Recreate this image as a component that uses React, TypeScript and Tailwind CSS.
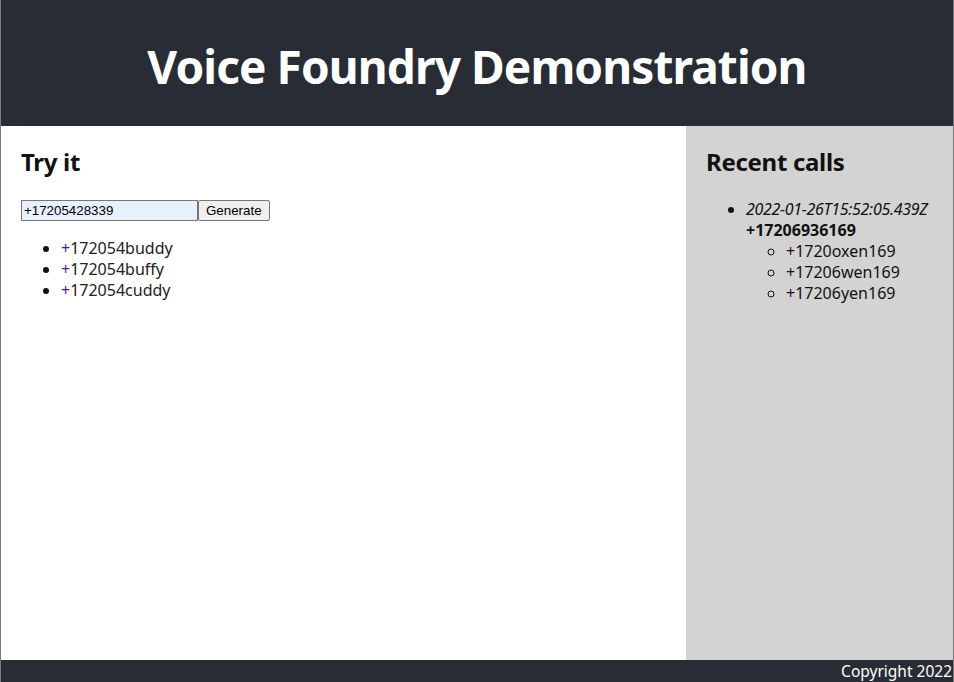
import React from 'react';

const suggestions = ['172054buddy', '172054buffy', '172054cuddy'];
const related = ['1720oxen169', '17206wen169', '17206yen169'];

const App: React.FC = () => {
  return (
    <div className="h-[682px] flex flex-col border-x border-[#7a7a7a] font-['Noto_Sans',sans-serif] text-[#111]">
      <header className="h-[126px] shrink-0 bg-[#282c34] flex items-center justify-center">
        <h1 className="text-white text-[46px] tracking-[-0.9px] font-bold leading-none mt-[6px]">Voice Foundry Demonstration</h1>
      </header>

      <main className="flex flex-1">
        <section className="flex-1 bg-white px-5 pt-5">
          <h2 className="text-2xl font-bold leading-[32px] mb-[22px] tracking-[-0.3px]">Try it</h2>
          <form className="flex items-center h-[21px]" onSubmit={(e) => e.preventDefault()}>
            <input
              defaultValue="+17205428339"
              className="w-[177px] h-[21px] border border-[#767676] bg-[#e8f0fe] px-[2px] text-[13.33px] font-['Liberation_Sans',sans-serif] text-black outline-none"
            />
            <button className="h-[21px] px-[7px] border border-[#767676] rounded-[2px] bg-[#efefef] text-[13.33px] font-['Liberation_Sans',sans-serif] text-black">
              Generate
            </button>
          </form>
          <ul className="list-disc pl-10 mt-[17px] text-base leading-[21px]">
            {suggestions.map((s) => (
              <li key={s}>
                <a href="#" className="text-[#222]"><span className="text-[#551a8b]">+</span>{s}</a>
              </li>
            ))}
          </ul>
        </section>

        <aside className="w-[267px] shrink-0 bg-[#d3d3d3] px-5 pt-5">
          <h2 className="text-2xl font-bold leading-[32px] mb-[21px] tracking-[-0.3px]">Recent calls</h2>
          <ul className="list-disc pl-10 text-base leading-[21px] whitespace-nowrap">
            <li>
              <i className="tracking-[-0.3px]">2022-01-26T15:52:05.439Z</i>
              <div className="font-bold">+17206936169</div>
              <ul className="list-[circle] pl-10">
                {related.map((r) => (
                  <li key={r}>+{r}</li>
                ))}
              </ul>
            </li>
          </ul>
        </aside>
      </main>

      <footer className="h-[22px] shrink-0 bg-[#282c34] text-white text-[15.5px] leading-[22px] text-right pr-[1px]">
        Copyright 2022
      </footer>
    </div>
  );
};

export default App;
